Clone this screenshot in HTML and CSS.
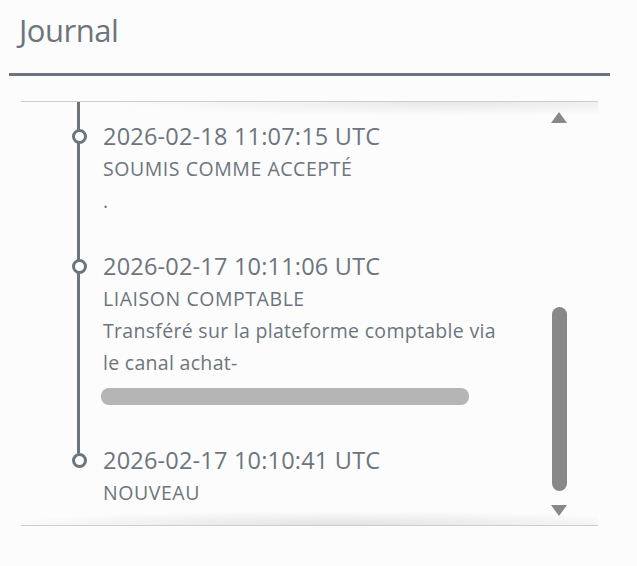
FILE: index.html
```html
<!DOCTYPE html>
<html lang="fr">
<head>
<meta charset="utf-8">
<title>Journal</title>
<link rel="stylesheet" href="styles.css">
</head>
<body>
<section class="panel">
  <header class="panel-head">
    <h1 class="panel-title">Journal</h1>
  </header>
  <div class="log-box">
    <div class="log-scroll">
      <ol class="timeline">
        <li class="entry">
          <span class="marker"></span>
          <div class="entry-date">2026-02-18 11:07:15 UTC</div>
          <div class="entry-status">SOUMIS COMME ACCEPTÉ</div>
          <div class="entry-text">.</div>
        </li>
        <li class="entry">
          <span class="marker"></span>
          <div class="entry-date">2026-02-17 10:11:06 UTC</div>
          <div class="entry-status">LIAISON COMPTABLE</div>
          <div class="entry-text">Transféré sur la plateforme comptable via<br>le canal achat-<br><span class="redacted"></span></div>
        </li>
        <li class="entry entry-last">
          <span class="marker"></span>
          <div class="entry-date">2026-02-17 10:10:41 UTC</div>
          <div class="entry-status">NOUVEAU</div>
        </li>
      </ol>
    </div>
    <div class="scrollbar">
      <span class="arrow arrow-up"></span>
      <div class="track"><span class="thumb"></span></div>
      <span class="arrow arrow-down"></span>
    </div>
    <div class="shade shade-top"></div>
    <div class="shade shade-bottom"></div>
  </div>
</section>
</body>
</html>
```
FILE: styles.css
```css
html, body {
  margin: 0;
  padding: 0;
  background: #fcfcfc;
}
body {
  font-family: "Open Sans", "Noto Sans", sans-serif;
  color: #6c757d;
}
.panel {
  width: 637px;
  height: 566px;
  box-sizing: border-box;
  padding-top: 9px;
}
.panel-head {
  margin-left: 9px;
  width: 601px;
  border-bottom: 3px solid #6c757d;
  height: 64px;
  box-sizing: content-box;
}
.panel-title {
  margin: 0 0 0 10px;
  font-weight: 400;
  font-size: 31px;
  line-height: 42px;
  letter-spacing: -0.5px;
}
.log-box {
  position: relative;
  margin: 25px 0 0 21px;
  width: 577px;
  height: 423px;
  border-top: 1px solid #cdcdcd;
  border-bottom: 1px solid #cdcdcd;
  display: flex;
  overflow: hidden;
}
.log-scroll {
  flex: 1;
}
.timeline {
  list-style: none;
  margin: 0;
  padding: 17px 0 0 82px;
}
.entry {
  position: relative;
  padding-bottom: 32px;
}
.entry::before {
  content: "";
  position: absolute;
  left: -26px;
  top: 0;
  bottom: 0;
  width: 3px;
  background: #6c757d;
}
.entry:first-child::before {
  top: -20px;
}
.entry-last::before {
  bottom: auto;
  height: 10px;
}
.marker {
  position: absolute;
  left: -31px;
  top: 10px;
  width: 9px;
  height: 9px;
  border: 3px solid #6c757d;
  border-radius: 50%;
  background: #fcfcfc;
  z-index: 1;
}
.entry-date {
  font-size: 23.5px;
  letter-spacing: 0.2px;
  line-height: 34px;
}
.entry-status {
  font-size: 19.5px;
  letter-spacing: 0.55px;
  line-height: 32px;
}
.entry-text {
  font-size: 19.5px;
  letter-spacing: 0.3px;
  line-height: 32px;
}
.redacted {
  display: inline-block;
  vertical-align: middle;
  margin-left: -2px;
  width: 368px;
  height: 17px;
  border-radius: 8px;
  background: #b5b5b5;
}
.scrollbar {
  width: 16px;
  margin-right: 31px;
  display: flex;
  flex-direction: column;
  align-items: center;
  padding: 10px 0 9px;
}
.arrow {
  width: 0;
  height: 0;
  border-left: 8px solid transparent;
  border-right: 8px solid transparent;
}
.arrow-up {
  border-bottom: 11px solid #888;
}
.arrow-down {
  border-top: 11px solid #888;
}
.track {
  flex: 1;
  width: 16px;
  display: flex;
  flex-direction: column;
  justify-content: flex-end;
  padding-bottom: 14px;
}
.thumb {
  display: block;
  width: 15px;
  height: 184px;
  margin: 0 auto;
  border-radius: 8px;
  background: #888;
}
.shade {
  position: absolute;
  left: 0;
  right: 0;
  height: 14px;
  pointer-events: none;
}
.shade-top {
  top: 0;
  background: radial-gradient(60% 100% at 75% 0, rgba(0,0,0,0.08), rgba(0,0,0,0));
}
.shade-bottom {
  bottom: 0;
  background: radial-gradient(60% 100% at 55% 100%, rgba(0,0,0,0.10), rgba(0,0,0,0));
}
```
